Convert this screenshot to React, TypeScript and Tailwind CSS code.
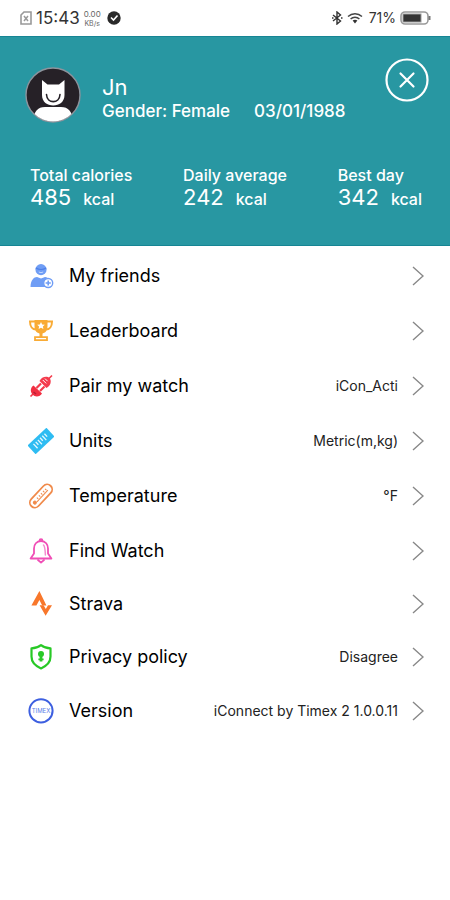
import type { ReactNode } from "react";

type MenuItem = {
  label: string;
  value?: string;
  icon: ReactNode;
  height?: string;
};

const stats = [
  { label: "Total calories", value: "485" },
  { label: "Daily average", value: "242" },
  { label: "Best day", value: "342" },
];

const menuItems: MenuItem[] = [
  {
    label: "My friends",
    icon: (
      <svg viewBox="0 0 26 26" className="size-[26px]" aria-hidden="true">
        <circle cx="13" cy="6.6" r="5.6" fill="#6f9df5" />
        <path d="M7.8 5Q13 8 18.2 5" fill="none" stroke="#4d7fe6" strokeWidth="1.2" />
        <path d="M10.8 9Q13 10.4 15.2 9" fill="none" stroke="#dbe7ff" strokeWidth="0.8" />
        <path d="M2.5 24C2.5 17 6 14 9 14L13 15.5L17 14C19 14 20 15 21 16.5V24Z" fill="#6f9df5" />
        <circle cx="20.2" cy="20" r="4.5" fill="#fff" stroke="#6f9df5" strokeWidth="1.4" />
        <path d="M17.6 20h5.2M20.2 17.4v5.2" stroke="#6f9df5" strokeWidth="1.6" />
      </svg>
    ),
  },
  {
    label: "Leaderboard",
    icon: (
      <svg viewBox="0 0 26 26" className="size-[26px]" aria-hidden="true">
        <path
          d="M6.5 2H19.5V8C19.5 13 17 15.5 13 15.5S6.5 13 6.5 8Z"
          fill="#f9ab35"
        />
        <path
          d="M7 3.5H2C2 8.5 4.5 11.5 8 11.5M19 3.5H24C24 8.5 21.5 11.5 18 11.5"
          fill="none"
          stroke="#f9ab35"
          strokeWidth="2"
        />
        <path d="M11.5 15h3v4h-3z" fill="#f9ab35" />
        <path d="M7 19.2h12v3H7z" fill="none" stroke="#f9ab35" strokeWidth="1.8" />
        <path
          d="M13 4L14.2 6.4L16.8 6.7L14.9 8.5L15.4 11.1L13 9.8L10.6 11.1L11.1 8.5L9.2 6.7L11.8 6.4Z"
          fill="#fff"
        />
      </svg>
    ),
  },
  {
    label: "Pair my watch",
    value: "iCon_Acti",
    icon: (
      <svg viewBox="0 0 26 26" className="size-[26px]" aria-hidden="true">
        <path d="M2.5 23.5L6 20M20 6.5L24 2.5" stroke="#f43b4c" strokeWidth="1.6" />
        <path
          d="M5.5 12.5L14 20.5C12 24 7 24.5 4.5 21.5C1.8 18.5 2.5 14.5 5.5 12.5Z"
          fill="#f12f42"
        />
        <path
          d="M11.5 8C13.5 3.5 19 2.5 21.5 5C24 8 22.5 13 18.5 15Z"
          fill="#f43b4c"
        />
        <path d="M8.5 15L13 10.5M12 18L16.5 13.5" stroke="#f43b4c" strokeWidth="2.2" />
        <path d="M14.8 7L18.2 10.4M17 5.6L19.6 8.2" stroke="#fff" strokeWidth="1" />
        <path d="M5.5 19L8 21" stroke="#b51f35" strokeWidth="1.4" />
      </svg>
    ),
  },
  {
    label: "Units",
    value: "Metric(m,kg)",
    icon: (
      <svg viewBox="0 0 26 26" className="size-[26px]" aria-hidden="true">
        <g transform="rotate(-43 13 13)">
          <path d="M0 7h26v12H0z" fill="#2ebcf2" />
          <path
            d="M5.5 10v6M8.5 10v4M11.5 10v6M14.5 10v4M17.5 10v6M20.5 10v4"
            stroke="#e4f8ff"
            strokeWidth="1.3"
          />
        </g>
      </svg>
    ),
  },
  {
    label: "Temperature",
    value: "°F",
    icon: (
      <svg viewBox="0 0 26 26" className="size-[26px]" aria-hidden="true">
        <g transform="rotate(-47 13 13)" fill="none" stroke="#f08a4a">
          <rect x="-1" y="8" width="28" height="10" rx="5" strokeWidth="1.8" />
          <path d="M6 14H22" strokeWidth="1" />
          <path d="M9 11v2M12 11v2M15 11v2M18 11v2M21 11v2" strokeWidth="1" />
          <circle cx="4" cy="13" r="1.5" fill="#f08a4a" strokeWidth="1" />
        </g>
      </svg>
    ),
  },
  {
    label: "Find Watch",
    icon: (
      <svg viewBox="0 0 26 26" className="size-[26px]" aria-hidden="true">
        <g fill="none" stroke="#f04fb6" strokeWidth="1.8" strokeLinecap="round" strokeLinejoin="round">
          <path d="M13 3C8.5 3 6 6.5 6 10.5V15.5L2.6 20.5H23.4L20 15.5V10.5C20 6.5 17.5 3 13 3Z" />
          <path d="M11.6 2.4C11.6 0.8 14.4 0.8 14.4 2.4" />
          <path d="M10 22L13 24.6L16 22" />
          <path d="M15.5 7C17 8.5 17.2 11 17.4 17" strokeWidth="1.5" stroke="#f58bcf" />
        </g>
      </svg>
    ),
  },
  {
    label: "Strava",
    height: "h-[52px]",
    icon: (
      <svg viewBox="0 0 26 26" className="size-[26px]" aria-hidden="true">
        <path
          d="M11.4 0L18.4 14.5H14.2L11.4 9L8.4 14.5H3.4Z"
          fill="#f8772b"
        />
        <path
          d="M11.6 14.2H15.6L17.8 18L20 14.2H24L17.6 24.8Z"
          fill="#f8772b"
        />
      </svg>
    ),
  },
  {
    label: "Privacy policy",
    value: "Disagree",
    height: "h-[53px]",
    icon: (
      <svg viewBox="0 0 26 26" className="size-[26px]" aria-hidden="true">
        <path
          d="M13 1.2C10 3.6 7 4.4 3.5 4.4V12.6C3.5 18.6 7.5 22.1 13 24.4C18.5 22.1 22.5 18.6 22.5 12.6V4.4C19 4.4 16 3.6 13 1.2Z"
          fill="none"
          stroke="#28c926"
          strokeWidth="2.2"
          strokeLinejoin="round"
        />
        <circle cx="13" cy="10" r="3" fill="#28c926" />
        <path d="M11.6 12h2.8v5.5h-2.8zM10.4 14.5h5.2v1.8h-5.2z" fill="#28c926" />
      </svg>
    ),
  },
  {
    label: "Version",
    value: "iConnect by Timex 2 1.0.0.11",
    icon: (
      <svg viewBox="0 0 26 26" className="size-[26px]" aria-hidden="true">
        <circle cx="13" cy="12.8" r="11.6" fill="none" stroke="#3d5fe0" strokeWidth="2" />
        <text
          x="13"
          y="15"
          textAnchor="middle"
          fontSize="6"
          fill="#5b7be8"
          className="font-['Inter',sans-serif]"
        >
          TIMEX
        </text>
      </svg>
    ),
  },
];

function StatusBar() {
  return (
    <div className="flex h-9 items-center justify-between pr-[19px] pl-5 text-[#333]">
      <div className="flex items-center">
        <svg viewBox="0 0 12 14" className="h-[14px] w-3" fill="none" stroke="#999" aria-hidden="true">
          <path d="M4 1H11V13H1V4Z" strokeWidth="1.6" />
          <path d="M4 5L8 10M8 5L4 10" strokeWidth="1.5" />
        </svg>
        <span className="ml-1 text-[17px] leading-5">15:43</span>
        <span className="ml-1 flex flex-col text-center text-[8px] leading-[10px] text-[#666]">
          <span>0.00</span>
          <span className="text-[7px] leading-[9px]">KB/s</span>
        </span>
        <svg viewBox="0 0 14 14" className="ml-[6px] size-[14px]" aria-hidden="true">
          <circle cx="7" cy="7" r="6.7" fill="#292929" />
          <path d="M4 6.5L6.5 9L10.5 4.5" fill="none" stroke="#fff" strokeWidth="1.6" />
        </svg>
      </div>
      <div className="flex items-center">
        <svg viewBox="0 0 12 14" className="h-[14px] w-3" fill="none" stroke="#333" aria-hidden="true">
          <path d="M2 4L9.5 10L6 13V1L9.5 4L2 10" strokeWidth="1.4" />
          <path d="M1 7h1.5M10 7h1.5" strokeWidth="1.4" />
        </svg>
        <svg viewBox="0 0 16 12" className="ml-1 h-3 w-4" fill="none" stroke="#444" aria-hidden="true">
          <path d="M1 4.5C5 0.8 11 0.8 15 4.5M3.6 7C6 4.6 10 4.6 12.4 7" strokeWidth="1.4" />
          <path d="M5.6 8.6Q8 6.8 10.4 8.6L8 11.4Z" fill="#333" stroke="none" />
        </svg>
        <span className="ml-[6px] text-sm leading-5">71%</span>
        <svg viewBox="0 0 31 14" className="ml-1 h-[14px] w-[31px]" aria-hidden="true">
          <rect x="1" y="1" width="27" height="12" rx="4" fill="#fff" stroke="#999" strokeWidth="1.6" />
          <rect x="3" y="3" width="18" height="8" fill="#333" stroke="#999" strokeWidth="1" />
          <path d="M29.5 5v4" stroke="#777" strokeWidth="2" />
        </svg>
      </div>
    </div>
  );
}

function Avatar() {
  return (
    <svg viewBox="0 0 56 56" className="size-14 shrink-0" role="img" aria-label="Profile picture">
      <defs>
        <clipPath id="avatar-clip">
          <circle cx="28" cy="28" r="26.5" />
        </clipPath>
      </defs>
      <circle cx="28" cy="28" r="27" fill="#262127" stroke="#8d939c" strokeWidth="1.4" />
      <path
        d="M17 13L22.5 17.5H34L39.5 13V28C39.5 35 34 38.5 28.2 38.5S17 35 17 28Z"
        fill="#fff"
      />
      <path
        d="M21.5 27.5C22 37 34.5 37 35 27.5"
        fill="none"
        stroke="#262127"
        strokeWidth="1.6"
        strokeLinecap="round"
      />
      <path
        d="M8 58C8 45 12 40 20 40H36C44 40 48 45 48 58Z"
        fill="#fff"
        clipPath="url(#avatar-clip)"
      />
    </svg>
  );
}

export default function App() {
  return (
    <div className="min-h-screen bg-white font-['Inter','Liberation_Sans',sans-serif] text-black">
      <StatusBar />

      <header className="border-y border-[#168594] bg-[#2897a2] pb-[34px] text-white">
        <div className="flex items-start justify-between pt-[21px] pr-[21px] pl-[25px]">
          <div className="flex pt-[9px]">
            <Avatar />
            <div className="ml-[21px] pt-2">
              <h1 className="text-[22px] leading-6">Jn</h1>
              <p className="flex gap-6 text-[17px] leading-6 font-medium">
                <span>Gender: Female</span>
                <span>03/01/1988</span>
              </p>
            </div>
          </div>
          <button type="button" aria-label="Close" className="-ml-8 cursor-pointer">
            <svg viewBox="0 0 44 44" className="size-11" fill="none" stroke="currentColor" aria-hidden="true">
              <circle cx="22" cy="22" r="20.5" strokeWidth="2.2" />
              <path d="M15.5 15.5L28.5 28.5M28.5 15.5L15.5 28.5" strokeWidth="2.2" strokeLinecap="round" />
            </svg>
          </button>
        </div>

        <dl className="mt-[42px] flex justify-between pr-7 pl-[30px]">
          {stats.map((stat) => (
            <div key={stat.label}>
              <dt className="text-base leading-5 font-medium">{stat.label}</dt>
              <dd className="flex items-baseline gap-3 leading-6">
                <span className="text-[22px]">{stat.value}</span>
                <span className="text-base font-medium">kcal</span>
              </dd>
            </div>
          ))}
        </dl>
      </header>

      <nav className="pt-[2px]">
        <ul>
          {menuItems.map((item) => (
            <li key={item.label}>
              <button
                type="button"
                className={`flex w-full cursor-pointer items-center pr-[26px] pl-7 text-left ${item.height ?? "h-[55px]"}`}
              >
                {item.icon}
                <span className="ml-[15px] text-lg leading-6">{item.label}</span>
                <span className="ml-auto text-sm leading-5 text-[#222]">{item.value}</span>
                <svg
                  viewBox="0 0 12 20"
                  className="ml-[14px] h-5 w-3 shrink-0"
                  fill="none"
                  stroke="#888"
                  strokeWidth="1.4"
                  aria-hidden="true"
                >
                  <path d="M1 1L11 10L1 19" />
                </svg>
              </button>
            </li>
          ))}
        </ul>
      </nav>
    </div>
  );
}
